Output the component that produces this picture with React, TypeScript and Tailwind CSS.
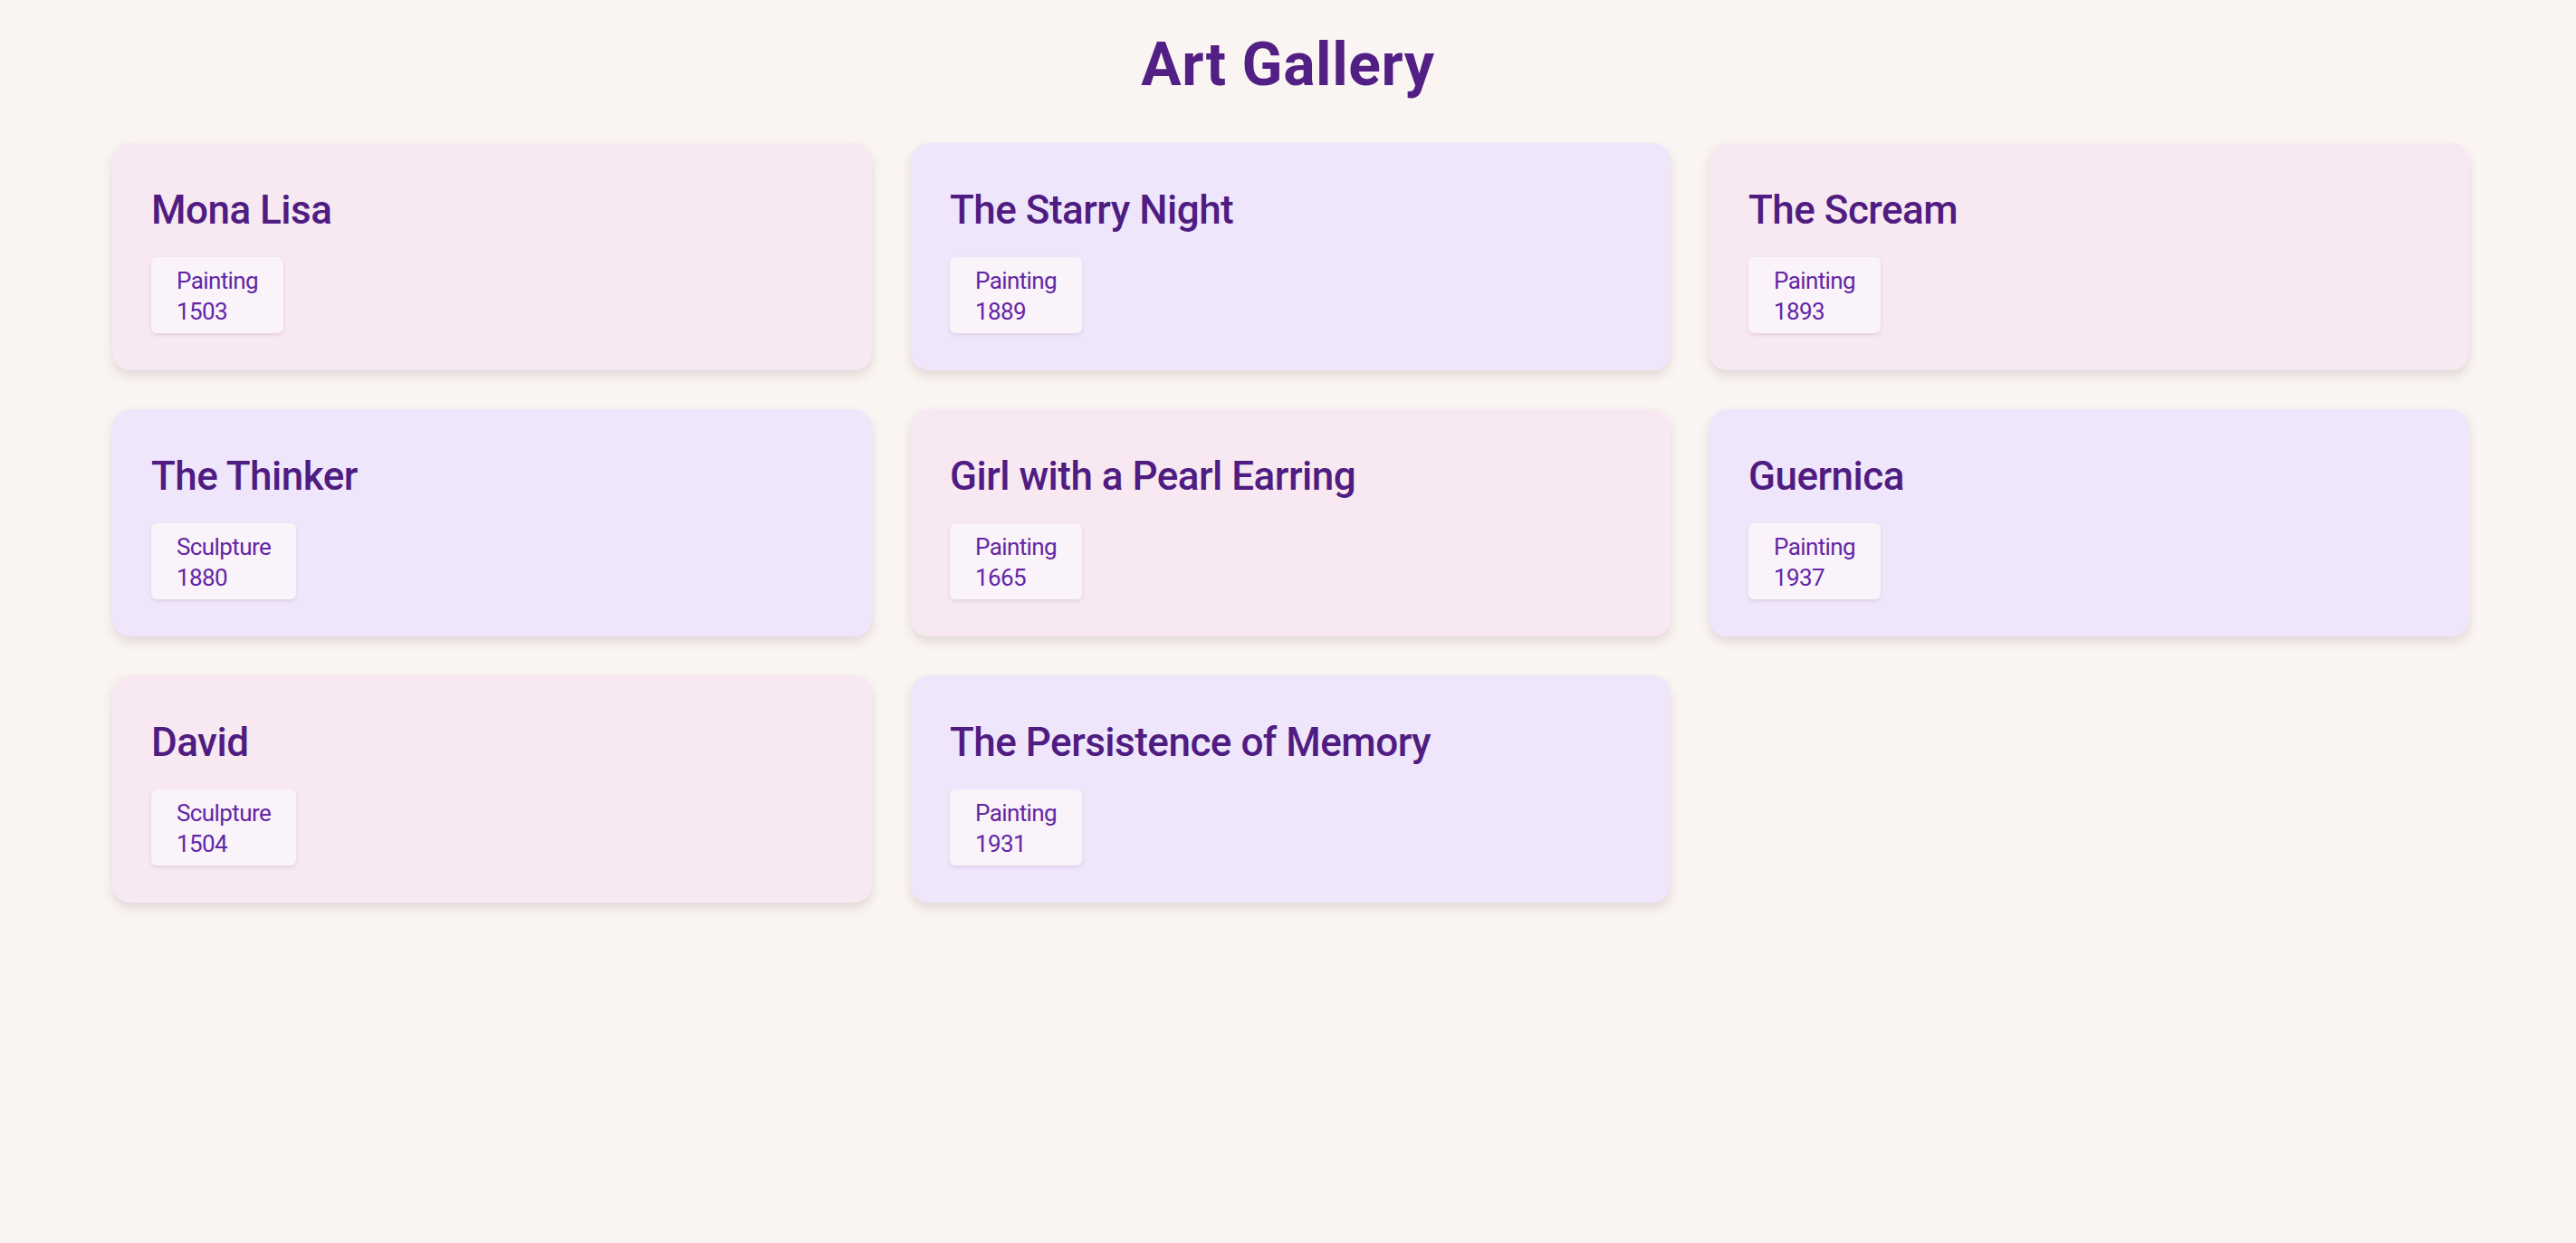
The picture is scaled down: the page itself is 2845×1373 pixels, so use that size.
import React from "react";

interface Artwork {
  title: string;
  kind: string;
  year: number;
}

const artworks: Artwork[] = [
  { title: "Mona Lisa", kind: "Painting", year: 1503 },
  { title: "The Starry Night", kind: "Painting", year: 1889 },
  { title: "The Scream", kind: "Painting", year: 1893 },
  { title: "The Thinker", kind: "Sculpture", year: 1880 },
  { title: "Girl with a Pearl Earring", kind: "Painting", year: 1665 },
  { title: "Guernica", kind: "Painting", year: 1937 },
  { title: "David", kind: "Sculpture", year: 1504 },
  { title: "The Persistence of Memory", kind: "Painting", year: 1931 },
];

const ArtCard: React.FC<{ art: Artwork; index: number }> = ({ art, index }) => {
  // even cards are pink, odd ones lavender
  const bg = index % 2 === 0 ? "bg-[#f7e8f1]" : "bg-[#efe6fc]";
  return (
    <div className={`${bg} rounded-[20px] px-[43px] pt-[44px] pb-[41px] shadow-[0_6px_12px_rgba(80,40,60,0.14)]`}>
      <h2 className="text-[44px] leading-[60px] font-medium tracking-[-0.5px] text-[#4f1c82]">{art.title}</h2>
      <div className="mt-[22px] inline-block rounded-[6px] bg-[#faf3f9] px-[28px] pt-[9px] pb-[7px] text-[26px] leading-[34px] tracking-[-0.6px] text-[#6326a6] shadow-[0_2px_4px_rgba(80,40,80,0.12)]">
        <div>{art.kind}</div>
        <div>{art.year}</div>
      </div>
    </div>
  );
};

const App: React.FC = () => {
  return (
    <div className="min-h-screen bg-[#faf5f2] font-['Roboto',sans-serif]">
      <h1 className="pt-[28px] text-center text-[66px] leading-[87px] font-bold tracking-[0.6px] text-[#521f84]">Art Gallery</h1>
      <div className="ml-[124px] mt-[43px] grid w-[2603px] grid-cols-3 gap-[43px]">
        {artworks.map((art, i) => (
          <ArtCard key={art.title} art={art} index={i} />
        ))}
      </div>
    </div>
  );
};

export default App;
